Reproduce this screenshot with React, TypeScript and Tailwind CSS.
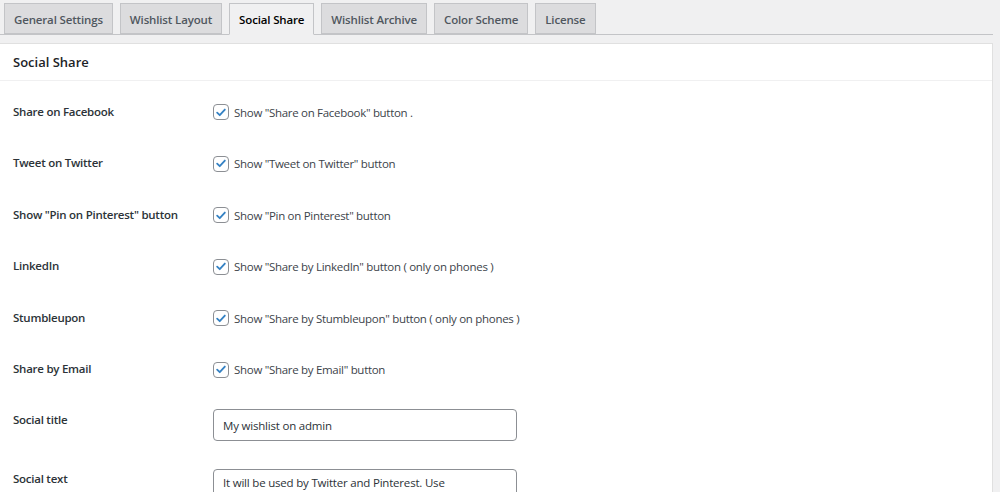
import React, { useState } from 'react';

const tabs = ['General Settings', 'Wishlist Layout', 'Social Share', 'Wishlist Archive', 'Color Scheme', 'License'];

const checkRows = [
  { label: 'Share on Facebook', text: 'Show "Share on Facebook" button .' },
  { label: 'Tweet on Twitter', text: 'Show "Tweet on Twitter" button' },
  { label: 'Show "Pin on Pinterest" button', text: 'Show "Pin on Pinterest" button' },
  { label: 'LinkedIn', text: 'Show "Share by LinkedIn" button ( only on phones )' },
  { label: 'Stumbleupon', text: 'Show "Share by Stumbleupon" button ( only on phones )' },
  { label: 'Share by Email', text: 'Show "Share by Email" button' },
];

function CheckBox({ checked, onToggle }: { checked: boolean; onToggle: () => void }) {
  return (
    <button
      type="button"
      onClick={onToggle}
      className="w-4 h-4 shrink-0 rounded-[4px] border border-[#8c8f94] bg-white flex items-center justify-center"
    >
      {checked && (
        <svg viewBox="0 0 20 20" className="w-[15px] h-[15px]">
          <path d="M4.5 10.2 L8.2 13.8 L15.5 5.8" fill="none" stroke="#3582c4" strokeWidth="2.6" strokeLinecap="round" strokeLinejoin="round" />
        </svg>
      )}
    </button>
  );
}

export default function App() {
  const [active, setActive] = useState('Social Share');
  const [checks, setChecks] = useState<boolean[]>(checkRows.map(() => true));
  const [title, setTitle] = useState('My wishlist on admin');
  const [text, setText] = useState('It will be used by Twitter and Pinterest. Use');

  return (
    <div className="min-h-[492px] bg-[#f0f0f1] pr-[7px] text-[#1d2327]" style={{ fontFamily: '"Open Sans", "Noto Sans", sans-serif' }}>
      <div className="flex gap-[7px] pl-1 pt-[3px] border-b border-[#c3c4c7] h-[35px]">
        {tabs.map(t => (
          <button
            key={t}
            onClick={() => setActive(t)}
            className={
              t === active
                ? 'h-[32px] px-[9px] pt-[2px] border border-[#c3c4c7] border-b-[#f0f0f1] bg-[#f0f0f1] text-black text-[11.5px] font-semibold tracking-[-0.15px]'
                : 'h-[31px] px-[9px] pt-[2px] border border-[#c3c4c7] bg-[#dcdcde] text-[#50575e] text-[11.5px] font-semibold tracking-[-0.15px]'
            }
          >
            {t}
          </button>
        ))}
      </div>

      <div className="mt-[8px] bg-white border border-[#e0e0e0] border-l-0">
        <div className="h-[37px] flex items-center px-[13px] pt-[2px] border-b border-[#f0f0f1]">
          <h2 className="text-[13px] font-semibold">Social Share</h2>
        </div>

        <div className="pt-[5px] pl-[13px]">
          {checkRows.map((r, i) => (
            <div key={r.label} className="h-[51.5px] flex items-center">
              <div className="w-[200px] text-[11.5px] font-semibold text-[#2c3338] tracking-[-0.25px] -mt-[1px]">{r.label}</div>
              <div className="flex items-center gap-[5px] mt-[1px]">
                <CheckBox checked={checks[i]} onToggle={() => setChecks(c => c.map((v, j) => (j === i ? !v : v)))} />
                <span className="text-[11.5px] tracking-[-0.3px] text-[#3c434a]">{r.text}</span>
              </div>
            </div>
          ))}

          <div className="h-[60px] flex items-start">
            <div className="w-[200px] pt-[16px] text-[11.5px] font-semibold text-[#2c3338] tracking-[-0.25px]">Social title</div>
            <input
              value={title}
              onChange={e => setTitle(e.target.value)}
              className="mt-[14px] w-[304px] h-[32px] px-[9px] border border-[#8c8f94] rounded-[4px] text-[11.5px] tracking-[-0.2px] text-[#2c3338] outline-none"
            />
          </div>

          <div className="h-[40px] flex items-start overflow-hidden">
            <div className="w-[200px] pt-[15px] text-[11.5px] font-semibold text-[#2c3338] tracking-[-0.25px]">Social text</div>
            <textarea
              value={text}
              onChange={e => setText(e.target.value)}
              className="mt-[14px] w-[304px] h-[60px] px-[9px] pt-[4px] border border-[#8c8f94] rounded-[4px] text-[11.5px] tracking-[-0.2px] text-[#2c3338] outline-none resize-none"
            />
          </div>
        </div>
      </div>
    </div>
  );
}
